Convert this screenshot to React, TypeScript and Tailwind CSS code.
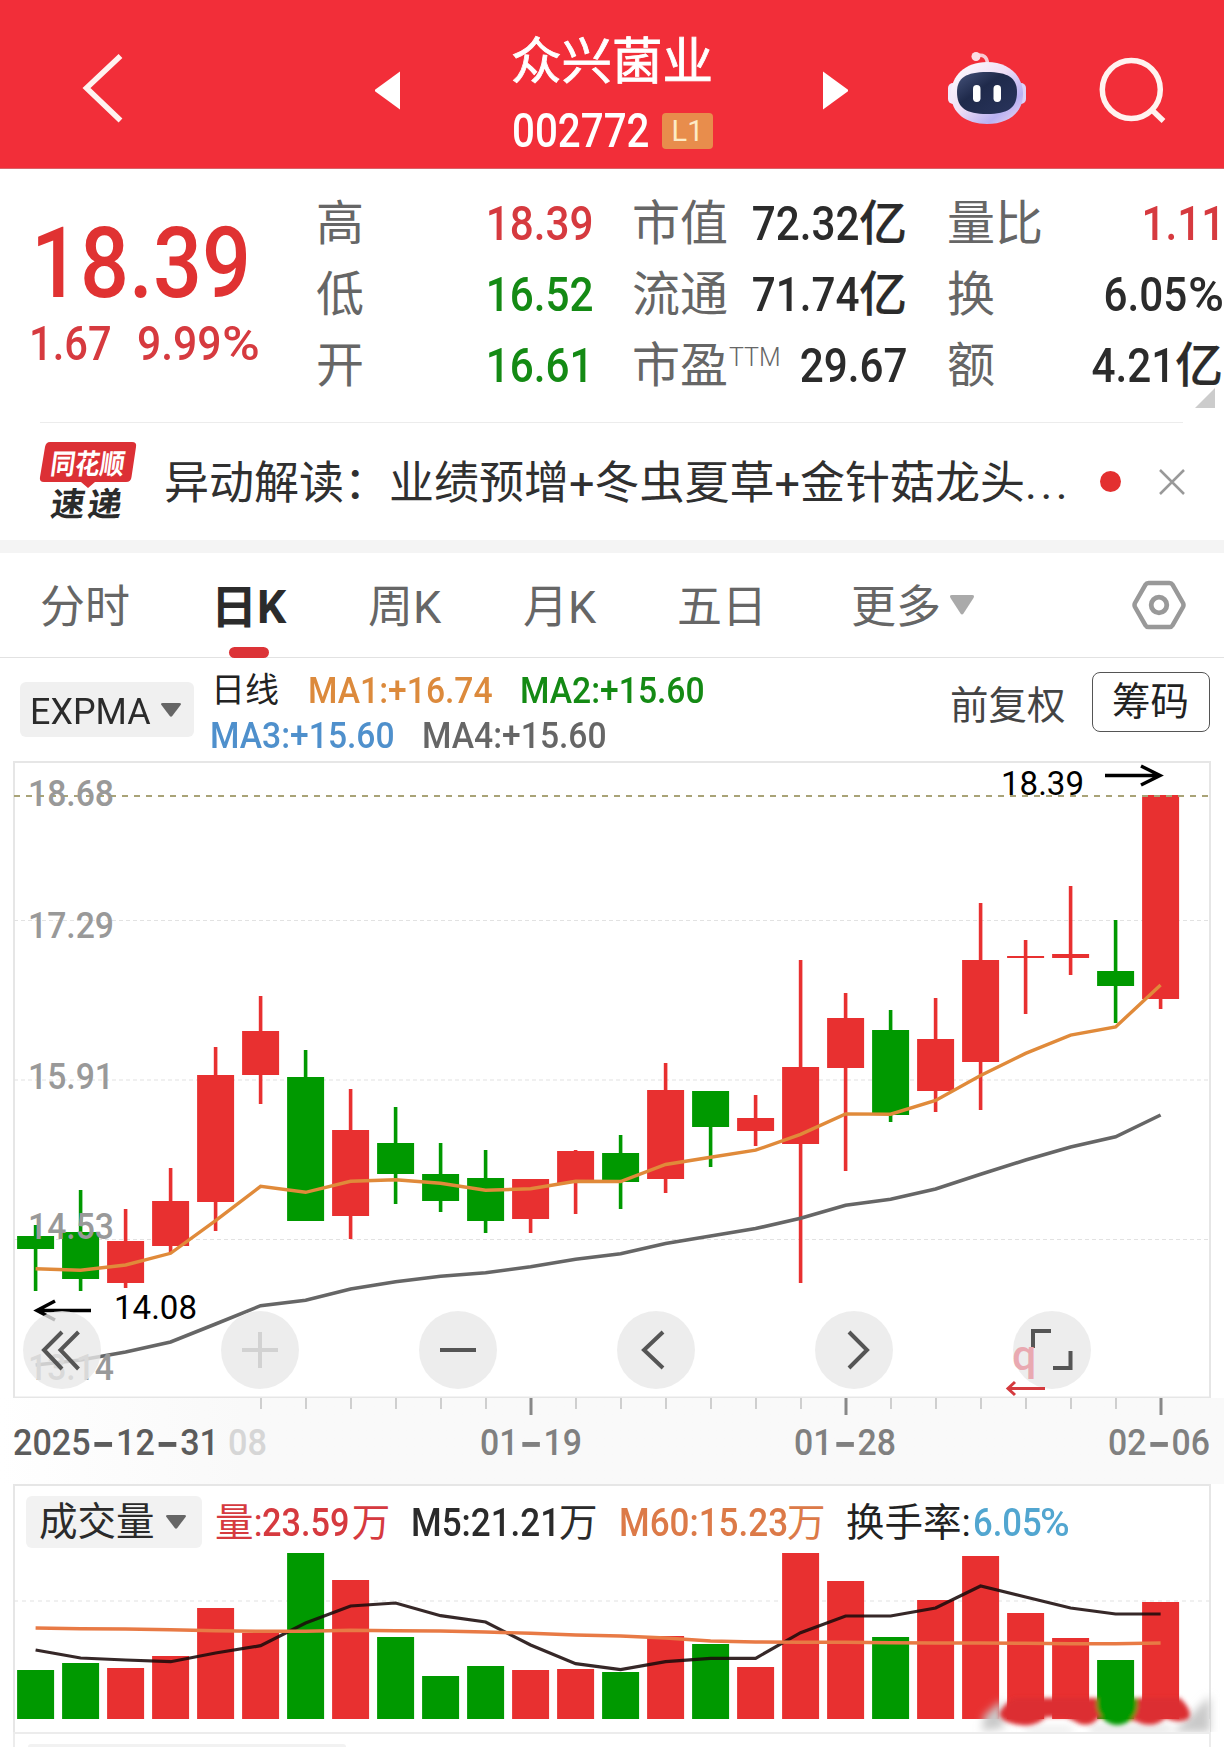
import type { ReactNode } from "react";

const UP = "#e83030";
const DOWN = "#009900";

// [open/close top, open/close bottom, wick top, wick bottom, direction]
type Candle = [number, number, number, number, 0 | 1];

const candles: Candle[] = [
  [1236, 1249, 1225, 1291, 0],
  [1232, 1279, 1190, 1291, 0],
  [1241, 1283, 1209, 1288, 1],
  [1201, 1246, 1168, 1253, 1],
  [1075, 1202, 1047, 1231, 1],
  [1031, 1075, 996, 1104, 1],
  [1077, 1221, 1050, 1221, 0],
  [1130, 1216, 1089, 1239, 1],
  [1143, 1174, 1107, 1204, 0],
  [1174, 1201, 1143, 1212, 0],
  [1178, 1221, 1150, 1233, 0],
  [1179, 1219, 1179, 1233, 1],
  [1151, 1183, 1150, 1214, 1],
  [1153, 1182, 1135, 1209, 0],
  [1090, 1179, 1063, 1193, 1],
  [1091, 1127, 1091, 1167, 0],
  [1118, 1131, 1095, 1146, 1],
  [1067, 1144, 960, 1283, 1],
  [1018, 1068, 993, 1171, 1],
  [1030, 1115, 1010, 1122, 0],
  [1039, 1091, 998, 1112, 1],
  [960, 1062, 903, 1110, 1],
  [956, 958, 940, 1014, 1],
  [954, 958, 886, 975, 1],
  [971, 986, 920, 1023, 0],
  [795, 999, 795, 1009, 1],
];

const ma1 = [
  1268.7, 1270.3, 1265, 1253.3, 1220.7, 1186.3, 1192.3, 1181.3, 1179.7, 1183.3, 1190.3, 1188.7, 1181.3,
  1181.5, 1164.5, 1157.3, 1150.2, 1134.4, 1113.9, 1114.2, 1100.4, 1075.5, 1053.4, 1035.2, 1026.9, 985,
];
const ma4 = [
  1365, 1360, 1352, 1342, 1324, 1305.7, 1300.3, 1289, 1281.7, 1276.3, 1272.7, 1266.7, 1259.3,
  1253.8, 1243.5, 1236, 1228.5, 1218.2, 1205.2, 1199.3, 1189, 1174.3, 1160, 1147, 1136.8, 1115,
];

const volumes = [
  1670, 1663, 1668, 1656, 1608, 1633, 1553, 1580, 1637, 1676, 1666, 1670, 1669,
  1672, 1636, 1644, 1667, 1553, 1581, 1637, 1600, 1556, 1613, 1638, 1660, 1602,
];
const m5 = [
  1650, 1658, 1660, 1661.7, 1653, 1645.7, 1623, 1606, 1603, 1615.7, 1622, 1645, 1663.7,
  1669.7, 1661.7, 1658.3, 1658.3, 1632.7, 1616, 1616, 1608, 1586, 1597, 1608, 1614, 1614,
];
const m60 = [
  1628, 1628.7, 1629, 1629.7, 1630.7, 1631.3, 1631.3, 1630.3, 1630.7, 1631, 1632, 1633.3, 1635,
  1636, 1638, 1641, 1642, 1642.3, 1642.3, 1642.7, 1643, 1643, 1643.3, 1643.7, 1643.7, 1643,
];

const cx = (i: number) => 35.6 + i * 45;
const line = (ys: number[]) => ys.map((y, i) => `${cx(i)},${y}`).join(" ");

function Triangle({ className }: { className: string }) {
  return (
    <svg viewBox="0 0 24 20" preserveAspectRatio="none" className={className}>
      <path d="M2 0H22Q25 0 23.500 3L13.500 18.500Q12 20.500 10.500 18.500L0.500 3Q-1 0 2 0Z" fill="currentColor" />
    </svg>
  );
}

// Text fitted to a given width inside a chart
function Label({
  x,
  y,
  w,
  size = 37,
  className,
  children,
}: {
  x: number;
  y: number;
  w: number;
  size?: number;
  className: string;
  children: ReactNode;
}) {
  return (
    <text x={x} y={y} fontSize={size} textLength={w} lengthAdjust="spacingAndGlyphs" className={className} fill="currentColor">
      {children}
    </text>
  );
}

function Header() {
  return (
    <header className="flex h-[169px] border-b border-[#d9646a] bg-[#f22e39] text-white">
      <svg viewBox="80 0 46 168" className="ml-20 h-[168px] w-[46px]">
        <path d="M120.500 56L86.500 88L120.500 120.500" fill="none" stroke="#fff3f0" strokeWidth="5.500" />
      </svg>
      <svg viewBox="375 0 25 168" className="ml-[249px] h-[168px] w-[25px]">
        <path d="M374 90.500L400 71.500V109.500Z" fill="#fff" />
      </svg>
      <div className="ml-[100px] w-[224px] pt-8 pl-[11px]">
        <h1 className="h-[60px] text-[50.5px] leading-[60px] whitespace-nowrap [-webkit-text-stroke:0.8px_#fff]">众兴菌业</h1>
        <div className="mt-[15px] ml-[1px] flex h-12 items-center">
          <span className="w-[150px] origin-left scale-x-[0.84] text-[48px] leading-[48px] font-medium">002772</span>
          <span className="mt-[-1px] flex h-9 w-[51px] items-center justify-center rounded-[4px] bg-[#e88d4c] text-[29px] leading-9 text-[#fdebc6]">
            L1
          </span>
        </div>
      </div>
      <svg viewBox="823 0 25 168" className="ml-[99px] h-[168px] w-[25px]">
        <path d="M849 90.500L823 71.500V109.500Z" fill="#fff" />
      </svg>
      <svg viewBox="946 0 82 168" className="ml-[98px] h-[168px] w-[82px]">
        <defs>
          <linearGradient id="shell" x1="0" y1="0" x2="1" y2="1">
            <stop offset="0" stopColor="#fff" />
            <stop offset="0.45" stopColor="#efdff6" />
            <stop offset="0.75" stopColor="#b9b1f2" />
            <stop offset="1" stopColor="#f2d8ee" />
          </linearGradient>
          <linearGradient id="visor" x1="0" y1="0" x2="1" y2="1">
            <stop offset="0" stopColor="#46537b" />
            <stop offset="0.4" stopColor="#1f2a4b" />
            <stop offset="1" stopColor="#29345c" />
          </linearGradient>
        </defs>
        <path d="M976 56Q987 53 987.500 64" fill="none" stroke="#f8c9d2" strokeWidth="3.500" />
        <circle cx="976" cy="56.500" r="4.500" fill="#fbdde6" />
        <rect x="948" y="83" width="12" height="21" rx="5" fill="#f3e9fb" />
        <rect x="1014" y="83" width="12" height="21" rx="5" fill="#dcd2f8" />
        <path d="M987 62C1009 62 1023 76 1023 94C1023 113 1008 124 987 124C966 124 951 113 951 94C951 76 965 62 987 62Z" fill="url(#shell)" />
        <path d="M987 72C1008 72 1017 78 1017 92C1017 108 1008 114 987 114C966 114 957 108 957 92C957 78 966 72 987 72Z" fill="url(#visor)" />
        <rect x="973" y="85" width="7.500" height="17" rx="3.700" fill="#fff" />
        <rect x="993.500" y="85" width="7.500" height="17" rx="3.700" fill="#fff" />
      </svg>
      <svg viewBox="1098 0 70 168" className="ml-[70px] h-[168px] w-[70px]">
        <circle cx="1131.300" cy="89.500" r="29" fill="none" stroke="#fff3f0" strokeWidth="5.500" />
        <path d="M1152 110L1163.500 121" stroke="#fff3f0" strokeWidth="5.500" />
      </svg>
    </header>
  );
}

function Stat({
  label,
  sup,
  value,
  unit,
  className,
}: {
  label: string;
  sup?: string;
  value: string;
  unit?: string;
  className: string;
}) {
  return (
    <div className="flex h-[71px] items-center justify-between text-[48px] leading-[71px] whitespace-nowrap">
      <span className="relative text-[#666]">
        {label}
        {sup && <span className="absolute top-[-8px] left-[97px] text-[25px] font-light">{sup}</span>}
      </span>
      <span className={`flex font-medium ${className}`}>
        <span className="origin-right scale-x-[0.88]">{value}</span>
        {unit === "%" && <span className="ml-[1px] w-[35px] origin-left scale-x-[1.02]">%</span>}
        {unit === "亿" && <span className="[-webkit-text-stroke:0.2px_#2b2b2b]">亿</span>}
      </span>
    </div>
  );
}

function Quote() {
  return (
    <section className="relative flex h-[254px] pt-[19px]">
      <div className="w-[316px] text-[#e03232]">
        <div className="mt-[26px] ml-[31px] h-[100px] w-[210px] origin-left scale-x-[0.88] text-[98px] leading-[100px] font-medium">
          18.39
        </div>
        <div className="mt-[1px] flex h-[58px] text-[49px] leading-[58px] text-[#d63a3f]">
          <span className="ml-[29px] w-[108px] origin-left scale-x-[0.85] font-medium">1.67</span>
          <span className="w-[85px] origin-left scale-x-[0.87] font-medium">9.99</span>
          <span className="origin-left scale-x-[1.05] font-medium">%</span>
        </div>
      </div>
      <div className="w-[278px]">
        <Stat label="高" value="18.39" className="mr-[1px] text-[#d63a3f]" />
        <Stat label="低" value="16.52" className="mr-[1px] text-[#148a14]" />
        <Stat label="开" value="16.61" className="mr-[1px] text-[#148a14]" />
      </div>
      <div className="ml-[38px] w-[275px]">
        <Stat label="市值" value="72.32" unit="亿" className="text-[#2b2b2b]" />
        <Stat label="流通" value="71.74" unit="亿" className="text-[#2b2b2b]" />
        <Stat label="市盈" sup="TTM" value="29.67" className="text-[#2b2b2b]" />
      </div>
      <div className="ml-10 w-[276px]">
        <Stat label="量比" value="1.11" className="-mr-[2px] text-[#d63a3f]" />
        <Stat label="换" value="6.05" unit="%" className="text-[#2b2b2b]" />
        <Stat label="额" value="4.21" unit="亿" className="text-[#2b2b2b]" />
      </div>
      <svg viewBox="0 0 20 20" className="absolute top-[219px] left-[1195px] h-5 w-5">
        <path d="M20 0V20H0Z" fill="#ccc" />
      </svg>
      <div className="absolute bottom-0 left-10 h-[1px] w-[1143px] bg-[#ececec]" />
    </section>
  );
}

function News() {
  return (
    <section className="flex h-[117px] items-center">
      <svg viewBox="38 440 100 84" className="ml-[38px] h-[84px] w-[100px]">
        <path
          d="M50 442H132Q137 442 136 447L131.500 477Q131 482 126 482H95L88 488L81 482H44Q39 482 40 477L45 447Q46 442 50 442Z"
          fill="#dc3035"
        />
        <g transform="skewX(-8)" className="font-bold">
          <text x="116" y="474" fontSize="28" textLength="74" lengthAdjust="spacingAndGlyphs" fill="#fff">
            同花顺
          </text>
          <text x="122" y="516" fontSize="33" textLength="34" lengthAdjust="spacingAndGlyphs" fill="#2b2b2b">
            速
          </text>
          <text x="159" y="516" fontSize="33" textLength="34" lengthAdjust="spacingAndGlyphs" fill="#2b2b2b">
            递
          </text>
        </g>
      </svg>
      <p className="mt-1 ml-[26px] w-[936px] text-[45px] leading-[60px] whitespace-nowrap text-[#303030]">
        异动解读：业绩预增+冬虫夏草+金针菇龙头<span className="tracking-[3.5px]">...</span>
      </p>
      <span className="h-[21px] w-[21px] rounded-full bg-[#e33030]" />
      <svg viewBox="0 0 26 26" className="ml-[38px] h-[26px] w-[26px]">
        <path d="M1 1L25 25M25 1L1 25" stroke="#999" strokeWidth="2.500" />
      </svg>
    </section>
  );
}

function Tabs() {
  return (
    <nav className="flex h-[105px] items-center border-b border-[#e2e2e2] text-[45px] leading-[60px] whitespace-nowrap text-[#666]">
      <span className="mt-[5px] ml-10 w-[171px]">分时</span>
      <span className="relative mt-[3px] w-[157px] text-[46px] font-bold text-[#2b2b2b]">
        日K
        <span className="absolute bottom-[-21px] left-[18px] h-[11px] w-10 rounded-full bg-[#dc3337]" />
      </span>
      <span className="mt-[5px] w-[155px]">周K</span>
      <span className="mt-[5px] w-[154px]">月K</span>
      <span className="mt-[5px] w-[174px]">五日</span>
      <span className="mt-[5px]">更多</span>
      <Triangle className="ml-[9px] h-5 w-6 text-[#aaa]" />
      <svg viewBox="0 0 54 50" className="ml-[158px] h-[50px] w-[54px]">
        <path
          d="M16.500 3H37.500Q39.500 3 40.500 4.700L51 23Q52 25 51 27L40.500 45.300Q39.500 47 37.500 47H16.500Q14.500 47 13.500 45.300L3 27Q2 25 3 23L13.500 4.700Q14.500 3 16.500 3Z"
          fill="none"
          stroke="#999"
          strokeWidth="4.500"
        />
        <circle cx="27" cy="25" r="7.800" fill="none" stroke="#999" strokeWidth="4.800" />
      </svg>
    </nav>
  );
}

function Indicators() {
  return (
    <section className="flex h-[103px] whitespace-nowrap">
      <div className="mt-6 ml-5 flex h-[55px] w-[174px] items-center rounded-[6px] bg-[#f0f0f0] pl-[10px] text-[37px] leading-[55px] text-[#2b2b2b]">
        <span className="mt-[3px] w-[119px] origin-left scale-x-[0.97]">EXPMA</span>
        <Triangle className="ml-3 h-[14px] w-5 text-[#666]" />
      </div>
      <div className="mt-[11px] ml-[17px] w-[739px] text-[36px] leading-[45px] font-medium">
        <div className="flex h-[45px]">
          <span className="mt-[-1px] w-[97px] text-[34px] font-normal text-[#222]">日线</span>
          <span className="w-[212px] origin-left scale-x-[0.935] text-[#dc8a3c]">MA1:+16.74</span>
          <span className="origin-left scale-x-[0.935] text-[#148a14]">MA2:+15.60</span>
        </div>
        <div className="flex h-[45px]">
          <span className="ml-[-1px] w-[212px] origin-left scale-x-[0.935] text-[#4f90cc]">MA3:+15.60</span>
          <span className="origin-left scale-x-[0.935] text-[#666]">MA4:+15.60</span>
        </div>
      </div>
      <span className="mt-5 text-[38.5px] leading-[55px] text-[#444]">前复权</span>
      <span className="mt-[14px] ml-[26px] flex h-[60px] w-[118px] items-center justify-center rounded-[8px] border border-[#555] text-[38.5px] leading-[56px] text-[#222]">
        筹码
      </span>
    </section>
  );
}

function ToolButton({ muted, children }: { muted?: boolean; children: ReactNode }) {
  return (
    <button type="button" className="h-[78px] w-[78px] rounded-full bg-[#e9e9e9]/80">
      <svg
        viewBox="-39 -39 78 78"
        className={muted ? "h-[78px] w-[78px] text-[#d2d2d2]" : "h-[78px] w-[78px] text-[#555]"}
        fill="none"
        stroke="currentColor"
        strokeWidth="4"
      >
        {children}
      </svg>
    </button>
  );
}

function KChart() {
  return (
    <section className="relative h-[637px]">
      <svg viewBox="0 761 1224 637" className="block h-[637px] w-full">
        <rect x="14" y="762" width="1196" height="635.500" fill="none" stroke="#e6e6e6" strokeWidth="2" />
        {[920.5, 1080, 1239.5].map((y) => (
          <path key={y} d={`M14 ${y}H1210`} stroke="#e2e2e2" strokeWidth="1.200" strokeDasharray="4 3" />
        ))}
        {candles.map(([top, bottom, high, low, up], i) => (
          <g key={i} fill={up ? UP : DOWN}>
            <rect x={cx(i) - 1.8} y={high} width="3.600" height={low - high} />
            <rect x={cx(i) - 18.5} y={top} width="37" height={bottom - top} />
          </g>
        ))}
        <path d="M14 796H1210" stroke="#a9a377" strokeWidth="1.800" strokeDasharray="6 6" />
        <polyline points={line(ma1)} fill="none" stroke="#e08a3a" strokeWidth="3.400" />
        <polyline points={line(ma4)} fill="none" stroke="#666" strokeWidth="3.600" />

        <g className="font-medium">
          <Label x={28} y={806} w={86} className="text-[#999]">18.68</Label>
          <Label x={28} y={938} w={86} className="text-[#999]">17.29</Label>
          <Label x={28} y={1088.500} w={86} className="text-[#999]">15.91</Label>
          <Label x={28} y={1238.500} w={86} className="text-[#999]">14.53</Label>
          <Label x={28} y={1380} w={86} className="text-[#999]">13.14</Label>
        </g>
        <Label x={1001} y={795} w={83} size={34} className="text-black">18.39</Label>
        <Label x={114} y={1319} w={83} size={34} className="text-black">14.08</Label>
        <path d="M1105 775.500H1160M1141 766L1160 775.500L1141 785" fill="none" stroke="#000" strokeWidth="3.500" />
        <path d="M91 1310.500H37M55 1301L37 1310.500L55 1320" fill="none" stroke="#000" strokeWidth="3.500" />
      </svg>
      <div className="absolute top-[550px] left-[23px] flex gap-[120px]">
        <ToolButton>
          <path d="M0 -18L-18 0L0 19M16.500 -18L-1.500 0L16.500 19" />
        </ToolButton>
        <ToolButton muted>
          <path d="M-18 0H18M0 -18V18" />
        </ToolButton>
        <ToolButton>
          <path d="M-18 0H18" />
        </ToolButton>
        <ToolButton>
          <path d="M7 -18L-12 0L7 18" />
        </ToolButton>
        <ToolButton>
          <path d="M-5 -18L13 0L-5 18" />
        </ToolButton>
        <ToolButton>
          <path d="M-19 -2V-19H-1M1 18H18.500V1" />
        </ToolButton>
      </div>
      <svg viewBox="1000 1330 60 68" className="absolute top-[569px] left-[1000px] h-[68px] w-[60px]">
        <text x="1012" y="1370" fontSize="43" className="font-medium" fill="#e9a9b1">
          q
        </text>
        <path d="M1045 1388.500H1008M1015 1382L1008 1388.500L1015 1395" fill="none" stroke="#d43a3e" strokeWidth="3" />
      </svg>
    </section>
  );
}

function DateAxis() {
  const dates: [number, number, string, string][] = [
    [480, 102, "01-19", "text-[#808080]"],
    [794, 102, "01-28", "text-[#808080]"],
    [1108, 102, "02-06", "text-[#808080]"],
    [13, 206, "2025-12-31", "text-[#5c5c5c]"],
  ];
  return (
    <section className="h-[86px] bg-gradient-to-r from-white via-[#f9f9f9] via-20% to-[#f9f9f9]">
      <svg viewBox="0 1398 1224 86" className="block h-[86px] w-full">
        {candles.map((_, i) => {
          if (i < 5) return null;
          const major = i === 11 || i === 18 || i === 25;
          return (
            <path
              key={i}
              d={`M${cx(i) + 0.4} 1398V${major ? 1415 : 1409}`}
              stroke={major ? "#888" : "#c4c4c4"}
              strokeWidth={major ? 3 : 1.6}
            />
          );
        })}
        <g className="font-medium">
          <Label x={228} y={1455} w={39} className="text-[#d6d6d6]">08</Label>
          {/* wide hyphens, dropped to the middle of the digits */}
          {dates.map(([x, w, d, color]) => (
            <Label key={d} x={x} y={1455} w={w} className={color}>
              {d.split("-").map((part, i) => (
                <tspan key={i}>
                  {i > 0 && (
                    <tspan dy="8" className="font-['Inter'] text-[60px] font-normal">
                      -
                    </tspan>
                  )}
                  <tspan dy={i > 0 ? -8 : 0}>{part}</tspan>
                </tspan>
              ))}
            </Label>
          ))}
        </g>
      </svg>
    </section>
  );
}

function Volume() {
  return (
    <section className="relative h-[248px]">
      <svg viewBox="0 1484 1224 248" className="block h-[248px] w-full">
        <defs>
          <filter id="soft" x="-10%" y="-50%" width="120%" height="200%">
            <feGaussianBlur stdDeviation="2" />
          </filter>
          <filter id="haze" x="-10%" y="-50%" width="120%" height="200%">
            <feGaussianBlur stdDeviation="4" />
          </filter>
        </defs>
        <path d="M14 1732V1485H1210V1732" fill="none" stroke="#e6e6e6" strokeWidth="2" />
        <path d="M14 1601H1210" stroke="#e2e2e2" strokeWidth="1.200" strokeDasharray="4 4" />
        {volumes.map((y, i) => (
          <rect key={i} x={cx(i) - 18.5} y={y} width="37" height={1719 - y} fill={candles[i][4] ? UP : DOWN} />
        ))}
        <polyline points={line(m5)} fill="none" stroke="#1a0a0a" strokeOpacity="0.880" strokeWidth="3.200" />
        <polyline points={line(m60)} fill="none" stroke="#e87a45" strokeWidth="3.400" />

        {/* smeared corner */}
        <path d="M1000 1719H1210V1732H978V1719Z" fill="#fff" />
        <g filter="url(#haze)">
          <path d="M984 1716L1002 1700L1004 1728L982 1731ZM1182 1724L1210 1696V1732H1172Z" fill="#c9c9c9" />
          <path d="M1026 1728H1072V1732H1026ZM1090 1726H1170V1732H1090Z" fill="#ddd" />
        </g>
        <g filter="url(#soft)">
          <path
            d="M1000 1712Q1006 1702 1014 1698L1180 1698Q1194 1712 1188 1719Q1176 1724 1166 1718Q1152 1730 1136 1721L1098 1718Q1092 1727 1080 1724L1066 1717L1046 1717Q1034 1729 1014 1724Q998 1720 1000 1712Z"
            fill="#dc2f33"
          />
          <path d="M1097 1698H1137Q1139 1712 1131 1720Q1117 1730 1104 1720Q1095 1712 1097 1698Z" fill={DOWN} />
        </g>
      </svg>
      <div className="absolute top-3 left-[26px] flex h-[52px] items-center text-[38.5px] leading-[52px] whitespace-nowrap">
        <span className="flex h-[52px] w-[176px] items-center rounded-[6px] bg-[#f2f2f2] pl-[13px] text-[#2b2b2b]">
          成交量
          <Triangle className="ml-[11px] h-[14px] w-5 text-[#666]" />
        </span>
        <span className="mt-[2px] ml-[13px] flex w-[196px] text-[#d63a3f]">
          量:<span className="ml-[-1px] w-[90px] origin-left scale-x-[0.89] font-medium">23.59</span>万
        </span>
        <span className="mt-[2px] flex w-[208px] text-[#2b2b2b]">
          <span className="w-[148px] origin-left scale-x-[0.91] font-medium">M5:21.21</span>万
        </span>
        <span className="mt-[2px] flex w-[227px] text-[#dc7a48]">
          <span className="w-[168px] origin-left scale-x-[0.91] font-medium">M60:15.23</span>万
        </span>
        <span className="mt-[2px] w-[127px] text-[#222]">换手率:</span>
        <span className="mt-[2px] w-[67px] origin-left scale-x-[0.9] font-medium text-[#52a6d0]">6.05</span>
        <span className="mt-[2px] origin-left scale-x-[1.05] font-medium text-[#52a6d0]">%</span>
      </div>
    </section>
  );
}

export default function App() {
  return (
    <main className="h-[1747px] w-[1224px] overflow-hidden bg-white font-['Roboto','Noto_Sans_CJK_SC',sans-serif]">
      <Header />
      <Quote />
      <News />
      <div className="h-[13px] bg-[#f4f4f4]" />
      <Tabs />
      <Indicators />
      <KChart />
      <DateAxis />
      <Volume />
      <div className="ml-[13px] h-[15px] w-[1198px] border-2 border-b-0 border-[#ececec] pt-[10px] pl-[13px]">
        <div className="h-[3px] w-[318px] rounded-t-[4px] bg-[#f2f2f2]" />
      </div>
    </main>
  );
}
